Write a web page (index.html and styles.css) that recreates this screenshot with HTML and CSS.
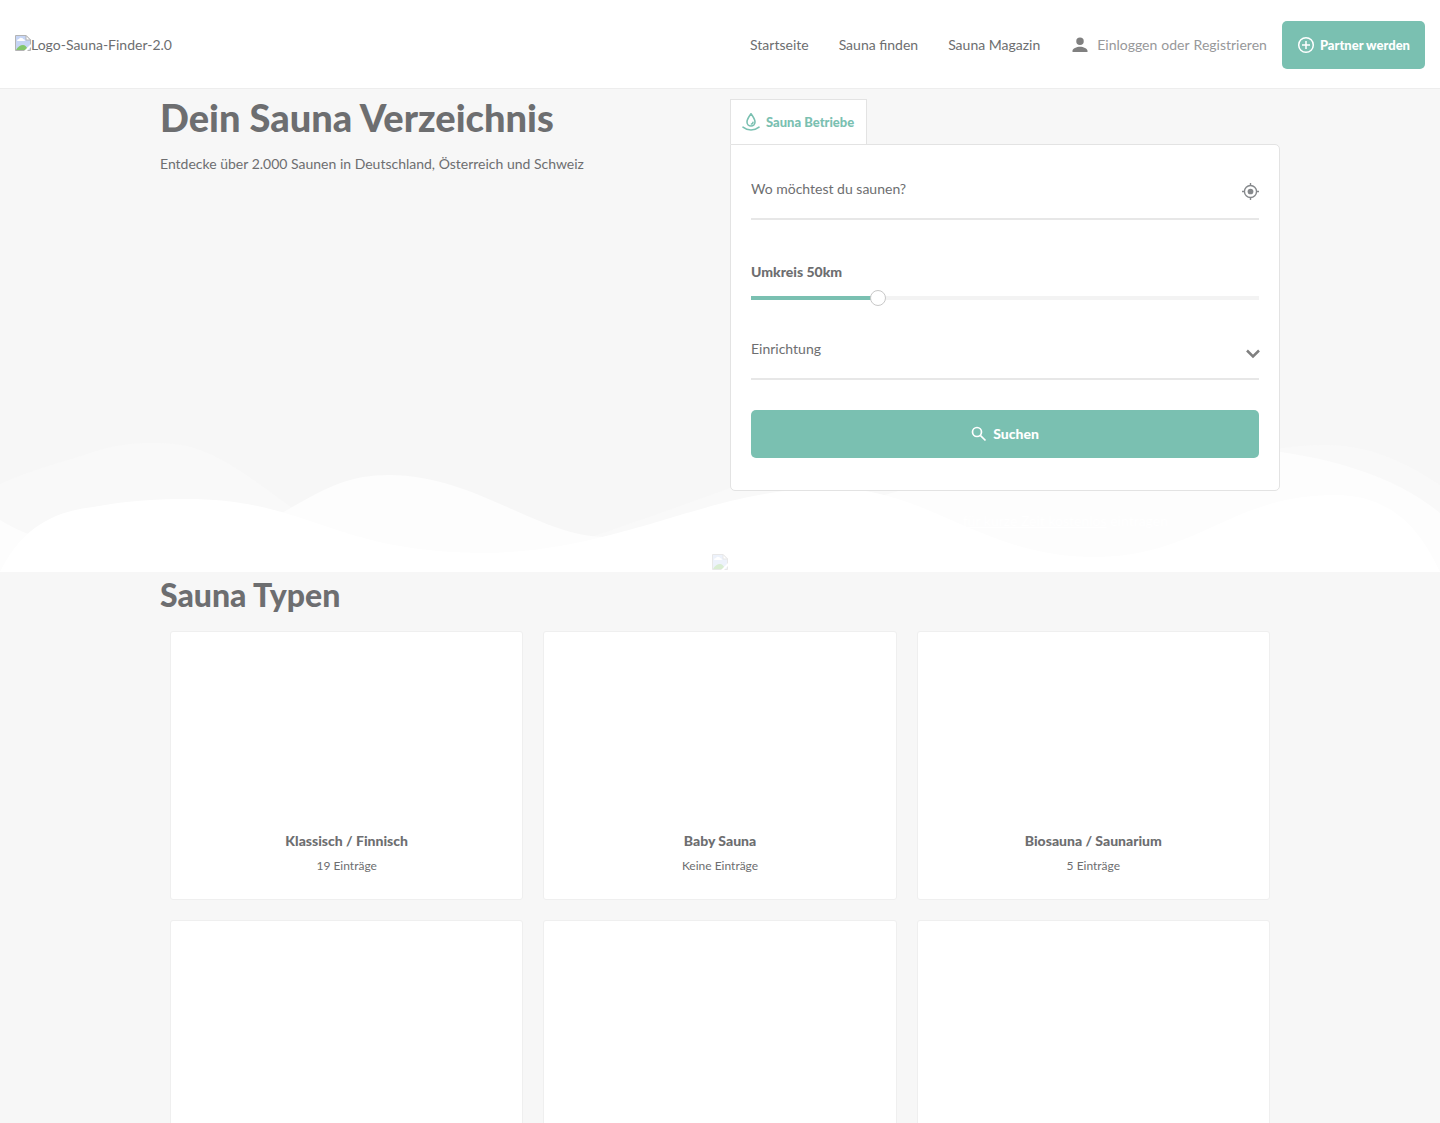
FILE: index.html
```html
<!DOCTYPE html>
<html lang="de">
<head>
    <meta charset="UTF-8">
    <meta name="viewport" content="width=device-width, initial-scale=1.0">
    <title>Sauna Finder</title>
    <link rel="stylesheet" href="styles.css">
</head>
<body>

    <svg class="sprite" aria-hidden="true">
        <!-- Platzhalter für fehlende Bilder -->
        <symbol id="broken" viewBox="0 0 16 16">
            <path d="M.5.5h10.500l4.500 4.500v10.500H.5z" fill="#c6d5f5" stroke="#b4b4b4"/>
            <path d="M2 6q0-2 2-2 1-2 3-1 1 0 1 1 2 0 2 2z" fill="#fff"/>
            <path d="M1 15q3-5 7-5 3 0 5 5z" fill="#83c66c"/>
            <path d="M9 16l7-7v3l-4 4z" fill="#fff"/>
            <path d="M11 .5V5h4.500z" fill="#fff" stroke="#b4b4b4"/>
        </symbol>
    </svg>

    <header class="header">
        <a href="#" class="logo"><svg class="broken"><use href="#broken"/></svg>Logo-Sauna-Finder-2.0</a>
        <nav class="nav">
            <a href="#">Startseite</a>
            <a href="#">Sauna finden</a>
            <a href="#">Sauna Magazin</a>
        </nav>
        <div class="user">
            <svg viewBox="0 0 24 24"><path d="M12 12a4.500 4.500 0 1 0 0-9 4.500 4.500 0 0 0 0 9zM3 20.500v-1.500c0-3 5-5 9-5s9 2 9 5v1.500z"/></svg>
            <a href="#">Einloggen</a> oder <a href="#">Registrieren</a>
        </div>
        <a href="#" class="btn btn-partner">
            <svg viewBox="0 0 18 18"><path d="M9 1.700a7.300 7.300 0 1 0 0 14.600 7.300 7.300 0 1 0 0-14.600M9 5v8M5 9h8"/></svg>
            Partner werden
        </a>
    </header>

    <main>
        <section class="hero">
            <svg class="waves" viewBox="0 0 1440 130" preserveAspectRatio="none">
                <path class="wave-back" d="M0 42C35 26 65 20 93 10C115 3 130 1 151 1C171 1 184 2 200 8C233 20 262 45 291 65C350 103 450 130 500 120C560 108 650 75 730 46C790 25 820 22 860 33C930 55 1010 75 1080 60C1170 40 1240 3 1326 3C1370 3 1407 21 1440 43V130H0z"/>
                <path class="wave-mid" d="M0 78C60 115 180 130 282 71C326 45 350 33 389 33C475 33 540 95 605 95C720 92 800 75 885 53C1010 16 1080 7 1180 2C1290 5 1380 22 1440 71V130H0z"/>
                <path class="wave-front" d="M0 130C18 93 46 70 93 65C130 58 160 57 186 57C310 57 330 110 484 111C620 110 710 46 830 46C930 46 980 115 1096 115C1200 114 1230 53 1335 53C1381 53 1415 75 1440 130z"/>
            </svg>
            <svg class="broken hero-image"><use href="#broken"/></svg>
            <div class="container hero-columns">
                <div class="intro">
                    <h1>Dein Sauna Verzeichnis</h1>
                    <p>Entdecke über 2.000 Saunen in Deutschland, Österreich und Schweiz</p>
                </div>
                <div class="search">
                    <button type="button" class="tab">
                        <svg viewBox="0 0 18 18"><path d="M9 .8C7 3.500 5 6 5 9a4 4 0 0 0 8 0C13 6 11 3.500 9 .8zM11 9.300a1.800 1.800 0 0 1-1.500 1.700M1 14.200c4.500 3.700 11.500 3.700 16 0"/></svg>
                        Sauna Betriebe
                    </button>
                    <form class="search-form">
                        <div class="field">
                            <input type="text" placeholder="Wo möchtest du saunen?" aria-label="Wo möchtest du saunen?">
                            <svg class="locate" viewBox="0 0 16 16"><circle cx="8" cy="8" r="5.700"/><circle class="dot" cx="8" cy="8" r="2.700"/><path d="M8 0v2.500M8 13.500V16M0 8h2.500M13.500 8H16"/></svg>
                        </div>
                        <div class="radius">
                            <label for="radius">Umkreis 50km</label>
                            <input type="range" id="radius" min="0" max="200" value="50">
                        </div>
                        <div class="field">
                            <select aria-label="Einrichtung">
                                <option>Einrichtung</option>
                            </select>
                            <svg class="chevron" viewBox="0 0 14 10"><path d="M1 1.500l6 6 6-6"/></svg>
                        </div>
                        <button type="submit" class="btn btn-search">
                            <svg viewBox="0 0 16 16"><circle cx="6" cy="6" r="4.500"/><path d="M9.300 9.300l5.200 5.200"/></svg>
                            Suchen
                        </button>
                    </form>
                    <p class="promo"><a href="#">für kurze Zeit kostenlos</a> eintragen</p>
                </div>
            </div>
        </section>

        <section class="container types">
            <h2>Sauna Typen</h2>
            <div class="grid">
                <a href="#" class="card">
                    <h3>Klassisch / Finnisch</h3>
                    <p>19 Einträge</p>
                </a>
                <a href="#" class="card">
                    <h3>Baby Sauna</h3>
                    <p>Keine Einträge</p>
                </a>
                <a href="#" class="card">
                    <h3>Biosauna / Saunarium</h3>
                    <p>5 Einträge</p>
                </a>
                <div class="card"></div>
                <div class="card"></div>
                <div class="card"></div>
            </div>
        </section>
    </main>

</body>
</html>
```
FILE: styles.css
```css
* {
    box-sizing: border-box;
}
body {
    margin: 0;
    background-color: #f7f7f7;
    color: #6d6e70;
    font-family: Lato, sans-serif;
    font-size: 14px;
    line-height: 20px;
}
a {
    color: inherit;
    text-decoration: none;
}
h1, h2, h3, p {
    margin: 0;
}
svg {
    flex: none;
    fill: none;
}
button, input, select {
    font: inherit;
    color: inherit;
}
.sprite {
    position: absolute;
    width: 0;
    height: 0;
}
.broken {
    width: 16px;
    height: 16px;
}
.container {
    width: 100%;
    max-width: 1120px;
    margin: 0 auto;
}

/* Header */
.header {
    display: flex;
    align-items: center;
    height: 89px;
    padding: 2px 15px 0;
    background-color: #fff;
    border-bottom: 1px solid #ededed;
}
.logo {
    display: flex;
    margin-right: auto;
}
.nav {
    display: flex;
    gap: 30px;
}
.user {
    display: flex;
    align-items: center;
    gap: 4px;
    margin: 0 15px 0 30px;
    color: #97989a;
}
.user svg {
    width: 20px;
    height: 20px;
    margin-right: 3px;
    fill: #808080;
}
.btn {
    display: flex;
    align-items: center;
    justify-content: center;
    height: 48px;
    border: none;
    border-radius: 5px;
    background-color: #7ac0b1;
    color: #fff;
    font-weight: 900;
    cursor: pointer;
}
.btn svg {
    stroke: #fff;
}
.btn-partner {
    gap: 5px;
    padding: 0 15px;
    font-size: 13px;
}
.btn-partner svg {
    width: 18px;
    height: 18px;
    stroke-width: 1.5;
}

/* Hero */
.hero {
    position: relative;
    padding: 10px 0 41px;
}
.waves {
    position: absolute;
    left: 0;
    bottom: 0;
    width: 100%;
    height: 130px;
}
.wave-back {
    fill: #f9f9f9;
}
.wave-mid {
    fill: #fdfdfd;
}
.wave-front {
    fill: #fff;
}
.hero-image {
    position: absolute;
    left: calc(50% - 8px);
    bottom: 2px;
    opacity: 0.3;
}
.hero-columns {
    position: relative;
    display: grid;
    grid-template-columns: 1fr 550px;
    gap: 20px;
}
h1 {
    font-size: 38px;
    line-height: 36px;
    font-weight: 900;
}
.intro p {
    margin-top: 19px;
}
.tab {
    display: flex;
    align-items: center;
    gap: 6px;
    height: 45px;
    padding: 0 12px 0 11px;
    background-color: #fff;
    border: 1px solid #e3e3e3;
    border-bottom: none;
    color: #7ac0b1;
    font-size: 13px;
    font-weight: 900;
}
.tab svg {
    width: 18px;
    height: 18px;
    stroke: #7ac0b1;
    stroke-width: 1.6;
    stroke-linecap: round;
}
.search-form {
    padding: 20px 20px 32px;
    background-color: #fff;
    border: 1px solid #e3e3e3;
    border-radius: 0 5px 5px 5px;
}
.field {
    display: flex;
    align-items: center;
    height: 55px;
    border-bottom: 2px solid #e7e7e7;
}
.field input, .field select {
    flex: 1;
    height: 48px;
    margin-bottom: 6px;
    padding: 0;
    border: none;
    outline: none;
    background: none;
    appearance: none;
}
.field input::placeholder {
    color: #6d6e70;
    opacity: 1;
}
.locate {
    width: 17px;
    height: 17px;
    stroke: #85888b;
    stroke-width: 1.3;
}
.locate .dot {
    fill: #85888b;
    stroke: none;
}
.chevron {
    width: 14px;
    height: 10px;
    margin: 4px -1px 0 0;
    stroke: #808080;
    stroke-width: 2.5;
}
.radius {
    padding: 42px 0 19px;
}
.radius label {
    display: block;
    font-weight: 900;
}
/* Track ist 8px pro Seite schmaler als das Feld, damit der Regler genau auf dem Wert sitzt */
.radius input {
    display: block;
    width: calc(100% + 16px);
    height: 16px;
    margin: 8px -8px 0;
    background: linear-gradient(to right, #7ac0b1 25%, #f3f3f3 25%) center / calc(100% - 16px) 4px no-repeat;
    appearance: none;
}
.radius input::-webkit-slider-thumb {
    width: 16px;
    height: 16px;
    background-color: #fff;
    border: 1px solid #c8c8c8;
    border-radius: 50%;
    appearance: none;
}
.btn-search {
    gap: 6px;
    width: 100%;
    margin-top: 30px;
}
.btn-search svg {
    width: 16px;
    height: 16px;
    stroke-width: 1.7;
}
.promo {
    margin-top: 20px;
    padding-right: 112px;
    color: #fff;
    text-align: right;
}
.promo a {
    text-decoration: underline;
}

/* Sauna Typen */
h2 {
    font-size: 32px;
    line-height: 36px;
    font-weight: 900;
}
.types {
    padding-top: 5px;
}
.grid {
    display: grid;
    grid-template-columns: repeat(3, 1fr);
    gap: 20px;
    padding: 18px 10px;
}
.card {
    display: flex;
    flex-direction: column;
    justify-content: flex-end;
    height: 269px;
    padding-bottom: 23px;
    background-color: #fff;
    border: 1px solid #efefef;
    border-radius: 3px;
    text-align: center;
}
.card h3 {
    font-size: 14px;
    line-height: 20px;
    font-weight: 900;
}
.card p {
    margin-top: 5px;
    font-size: 12px;
}
```
